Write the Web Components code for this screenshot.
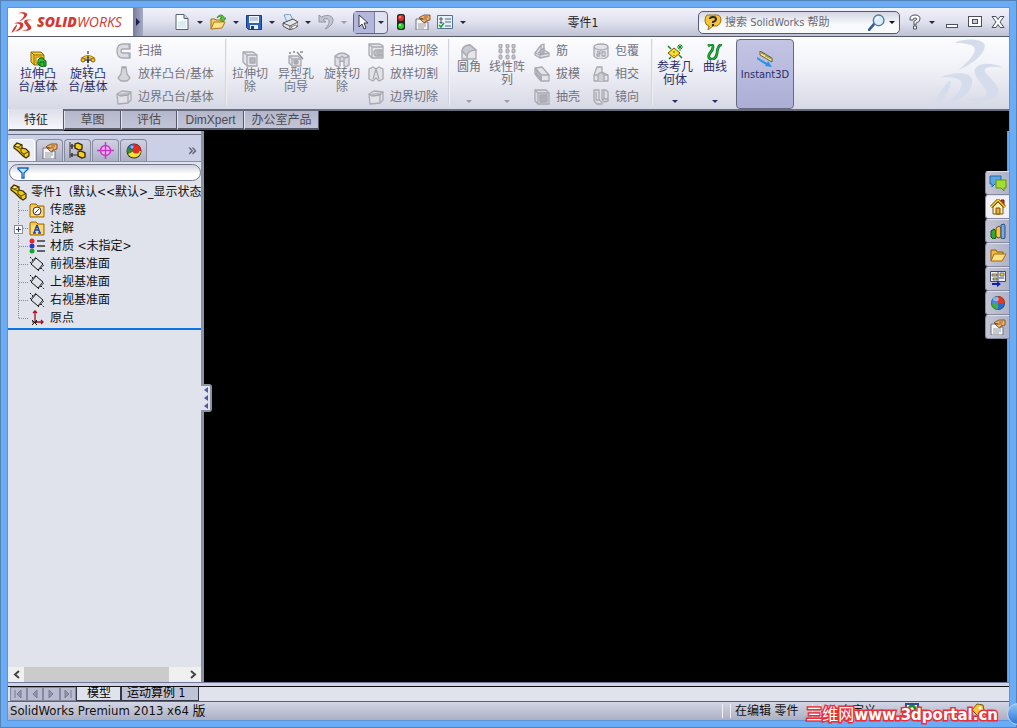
<!DOCTYPE html>
<html lang="zh-CN">
<head>
<meta charset="utf-8">
<title>SolidWorks - 零件1</title>
<style>
html,body{margin:0;padding:0}
body{font:12px/14px "DejaVu Sans Condensed","Noto Sans CJK SC",sans-serif;color:#1c1c24}
</style>
</head>
<body>
<sw-window></sw-window>
<script>
const g = (s) => `<g fill="none" stroke="#a9a9b2" stroke-width="1.3" stroke-linejoin="round">${s}</g>`;
const hand = '<path d="M5 3 9 1l6 0v5l-4 1-1 2-2-1-3-3 3 0-4-1z" fill="#f1b56d" stroke="#6b3f17" stroke-width=".8"/><path d="M9 3l4 0M8 5l4 0" stroke="#6b3f17" stroke-width=".7"/>';
const sheet = '<path d="M1 5h5l4 3 3 0v8H1z" fill="#f4f4f4" stroke="#6f7380"/><path d="M3 10h8M3 12h8M3 14h6" stroke="#858995" stroke-width=".8"/>';
const part = '<path d="M1 4 4 1l5 2v3l4 1 3 3v4l-3 2-3-2-5-5-4-3z" fill="#f0c81c" stroke="#3a2c00" stroke-width="1.2"/><path d="M4 5l4 2v3l3 2 4-2M1 4l3 1 5-2M8 7l2-1M11 12v3" fill="none" stroke="#5c4600" stroke-width="1"/><path d="M3 3.500l2-1 2 1-2 1z" fill="#fff3a0"/>';
const folder = '<path d="M1 3l1-1h5l2 2h6v11H1z" fill="#f7c741" stroke="#96680e"/><path d="M2 5h12v9H2z" fill="#fbd970"/>';
const plane = '<path d="M7 2l7 6-5 6-7-6z" fill="none" stroke="#111"/><path d="M1 1l3 3M12 12l3 3M1 7l6-6M9 15l6-6" stroke="#111" fill="none" stroke-dasharray="1.5 1"/>';
const ball = '<circle cx="8" cy="8" r="7" fill="#38a238"/><path d="M8 8V1a7 7 0 0 0-7 7z" fill="#4588e5"/><path d="M8 8V1a7 7 0 0 1 7 7z" fill="#df3c29"/><path d="M8 8h7a7 7 0 0 1-7 7z" fill="#2f6ad2"/><path d="M8 8v7a7 7 0 0 1-7-7z" fill="#3fae43"/><circle cx="8" cy="8" r="6.500" fill="none" stroke="#0003"/><ellipse cx="6" cy="4" rx="3" ry="2" fill="#fff6"/>';
const ICONS = {
 ds:['0 0 220 212','<g fill="currentColor" transform="translate(-10 -10)"><path d="M85 20C110 8 164 8 172 28c4 24-35 59-80 76 28-20 54-52 50-66-4-12-32-16-57-16z"/><path d="M38 126c32-16 91-20 96 8 4 33-37 70-86 72 32-14 56-41 54-64-2-14-32-18-64-16z"/><path d="M66 136c6 6 2 18-6 34l-18 32-29 20c10-32 32-67 53-86z"/><path d="M226 96c-26-3-50-3-54 7-2 12 37 38 42 60 4 35-50 44-102 29 38 0 68-4 66-18-4-24-38-46-37-66 3-28 55-28 85-12z"/></g>'],
 new:['0 0 16 16','<path d="M2 .500h8l4 4v11H2z" fill="#f8fcfe" stroke="#59616e"/><path d="M10 .500v4h4" fill="#c8dce8" stroke="#59616e"/><path d="M4 8l8-2v8H4z" fill="#dcebf4"/>'],
 open:['0 0 16 16','<path d="M1 15V5h4l1 1h5v3" fill="#f6d264" stroke="#9a6d14"/><path d="M1 15l3-7h11l-3 6z" fill="#fde28a" stroke="#a97a1b"/><path d="M7 4c1-4 7-4 7 0h2l-3 4-3-4h2c-1-2-3-2-5 0z" fill="#5fc73c" stroke="#1c7d1d" stroke-width=".7"/>'],
 save:['0 0 16 16','<path d="M.500 1.500h15v14h-13l-2-2z" fill="#2d63bd" stroke="#153c86"/><path d="M3 2h10v7H3z" fill="#f0f5fc"/><path d="M4 4h8M4 6h8" stroke="#8aa2c4"/><path d="M4 11h8v4H4z" fill="#e8eef8"/><path d="M5 12h3v3H5z" fill="#173e86"/>'],
 print:['0 0 16 16','<path d="M2 1l6-1 3 6-6 2z" fill="#d4e8fa" stroke="#6b89ab" stroke-width=".8"/><path d="M1 9l10-4 5 3v4l-8 4-7-4z" fill="#e8e8ea" stroke="#4a4a50"/><path d="M1 9l7 3 8-4M8 12v4" fill="none" stroke="#4a4a50" stroke-width=".9"/><path d="M9 13l5-2 1 2-4 2z" fill="#fff" stroke="#555" stroke-width=".7"/>'],
 undo:['0 0 16 16','<path d="M1 1v7h7L5 5.500c6-3 9 3 2 9.500 13-5 9-18-3.500-12z" fill="#c3c5d0" stroke="#8b8e9b" stroke-width=".9"/>'],
 cursor:['0 0 16 16','<path d="M3 1v12l3-3 2 5 2-1-2-5h4z" fill="#fff" stroke="#3b3b52"/>'],
 light:['0 0 10 16','<rect x="1" y="0" width="8" height="16" rx="2.500" fill="#252525"/><circle cx="5" cy="4" r="3" fill="#e5342c"/><circle cx="5" cy="12" r="3" fill="#2fcc2b"/><circle cx="4" cy="3" r="1" fill="#ff9a8d"/><circle cx="4" cy="11" r="1" fill="#a8ff9b"/>'],
 props:['0 0 16 16',sheet+hand],
 options:['0 0 16 16','<path d="M.500 1.500h15v13H.500z" fill="#e6f3fb" stroke="#54718d"/><path d="M3 4h2v2H3zM3 8h2v1H3z" fill="#fff" stroke="#456"/><path d="M8 5h6M8 8h6M8 12h6" stroke="#49647d"/><path d="M2 11l2 2 3-4" fill="none" stroke="#1ba228" stroke-width="1.500"/>'],
 help:['0 0 18 16','<path d="M3 1h11q3 1 3 5t-4 6h-4l-5 4 1-4q-4-1-4-5 0-5 2-6z" fill="#f7c536" stroke="#a2701c"/><path d="M6 5q0-2 3-2t3 2-3 3v1M9 10v2" fill="none" stroke="#2b2b2b" stroke-width="2"/>'],
 lens:['0 0 16 16','<path d="M6 9l-5 6" stroke="#355f96" stroke-width="2.500" stroke-linecap="round"/><circle cx="10" cy="6" r="5" fill="#d9eefb" stroke="#57789f" stroke-width="1.300"/><path d="M7 5q1-2 3-2" fill="none" stroke="#fff" stroke-width="1.500"/>'],
 question:['0 0 12 16','<path d="M1 5Q1 1 6 1t5 4q0 3-4 4v2H5V7q3-1 3-2 0-1-2-1T4 6H1zM4.500 12h3v3h-3z" fill="#fff" stroke="#4d5060"/>'],
 min:['0 0 14 14','<rect x="1.500" y="9.500" width="11" height="3" fill="#fff" stroke="#4d5060"/>'],
 restore:['0 0 14 14','<rect x=".500" y="1.500" width="13" height="10" fill="#fff" stroke="#4d5060"/><rect x="4.500" y="4.500" width="5" height="4" fill="#ccd" stroke="#4d5060"/>'],
 close:['0 0 14 14','<path d="M1 1.500h4l2 3 2-3h4L9 7l4 5.500H9L7 9.500l-2 3H1L5 7z" fill="#fff" stroke="#4d5060"/>'],
 extrude:['0 0 17 16','<path d="M1 1h10l3 3v10H4l-3-3z" fill="#f6cb2d" stroke="#8a6a07"/><path d="M1 1l3 3h10M4 4v10" fill="none" stroke="#8a6a07"/><path d="M6 6h6v6H6z" fill="#fff2a6" stroke="#a17b0c"/><path d="M8 9l2-2h3l1 2 2 1v5l-2 1-4-1-2-2z" fill="#2fc433" stroke="#0b6312"/><path d="M10 11h4v4M10 11v4" fill="none" stroke="#0b6312"/>'],
 revolve:['0 0 16 16','<path d="M8 0v16" stroke="#111" stroke-dasharray="3 1.500"/><path d="M2 8q6-5 12 0" fill="none" stroke="#9a6b00" stroke-width="3"/><path d="M2 8q6-5 12 0" fill="none" stroke="#fdd33c" stroke-width="1.500"/><circle cx="3" cy="9" r="2" fill="#fdc823" stroke="#8a5d00"/><circle cx="13" cy="9" r="2" fill="#fdc823" stroke="#8a5d00"/><path d="M5 9h6M8 5v7" stroke="#111"/>'],
 sweep:['0 0 16 16',g('<path d="M14 1H7Q1 1 1 8t6 7h7v-5H7q-2 0-2-2t2-2h7z" fill="#dcdce2"/><path d="M14 1q-2 2 0 5M14 10q-2 2 0 5"/>')],
 loft:['0 0 16 16',g('<path d="M6 1h4l1 7 3 4-3 3H5l-3-3 3-4z" fill="#d5d5dc"/><path d="M6 1q2 2 4 0"/>')],
 boundary:['0 0 16 16',g('<path d="M1 5l5-3 9 1v8l-3 3-10 1z" fill="#e2e2e7"/><path d="M1 5l3 2 8-1 3-3" fill="#bdbdc6"/><path d="M12 6v8"/>')],
 cut:['0 0 16 16',g('<path d="M1 1h10l4 3v11H5l-4-4z" fill="#e4e4e9"/><path d="M1 1l4 3h10M5 4v11"/><path d="M8 7h5v5H8z" fill="#b9b9c2"/>')],
 hole:['0 0 16 16',g('<path d="M1 5h9l3 3v7H4l-3-3z" fill="#e4e4e9"/><path d="M1 5l3 3h9M4 8v7"/><circle cx="8" cy="11" r="2" fill="#aaa"/><path d="M9 1l6 7M1 2h2M5 1h2M12 1h3" stroke="#888891"/>')],
 revcut:['0 0 16 16',g('<path d="M1 5q7-6 14 0v9q-2 2-5 1v-4q-2-2-4 0v4q-3 1-5-1z" fill="#dedee4"/><path d="M1 5q2 2 5 2l2-2 2 2q3 0 5-2M6 7v4M10 7v4"/>')],
 cutsweep:['0 0 16 16',g('<path d="M1 1h11l3 2v12H4l-3-3z" fill="#e6e6ea"/><path d="M1 1l3 3v11M4 4h11"/><path d="M14 7H9q-3 0-3 3t3 3h5v-2h-4q-2-1 0-2h4z" fill="#c3c3cb"/>')],
 cutloft:['0 0 16 16',g('<path d="M1 3l4-2 3 2 3-2 4 2v10l-4 2-3-3-3 3-4-2z" fill="#e2e2e7"/><path d="M8 3l-3 10M8 3l3 10" fill="#bbb"/>')],
 fillet:['0 0 16 16',g('<path d="M1 15V7q1-6 8-6l6 5v9H6z" fill="#e6e6ea"/><path d="M1 7l5 5v3"/><path d="M1 7q1-6 8-6l6 5q-8 0-9 6z" fill="#c9c9d1"/>')],
 pattern:['0 0 18 16','<g fill="#c9c9d0" stroke="#9c9ca6">'+[2,9,15].map(x=>[2,7,13].map(y=>`<rect x="${x-1}" y="${y-2}" width="3" height="4" rx="1"/>`).join('')).join('')+'</g>'],
 rib:['0 0 16 16',g('<path d="M1 10l6-8 3-1v6l5 3v3l-9 2-5-3z" fill="#e2e2e7"/><path d="M1 10l5 2 9-2M6 12v3M7 2v6l-3 2" /><path d="M6 8l4-3v5l-4 1z" fill="#b6b6bf"/>')],
 draft:['0 0 16 16',g('<path d="M1 2l7-1 7 8v6H7L1 8z" fill="#e3e3e8"/><path d="M1 2l6 7h8M7 9v6" /><path d="M2 3l5 6v5L2 7z" fill="#bdbdc6"/>')],
 shell:['0 0 16 16',g('<path d="M1 1h11l3 3v11H4l-3-3z" fill="#dcdce2"/><path d="M4 4h11M1 1l3 3v11"/><path d="M6 6h7v7H6z" fill="#b0b0ba"/>')],
 wrap:['0 0 16 16',g('<path d="M1 4q0-3 7-3t7 3v9q-2 3-7 3t-7-3z" fill="#e3e3e8"/><path d="M1 4q2 3 7 3t7-3M4 9h3v2H4v2h3M9 9h3v4H9z"/>')],
 intersect:['0 0 16 16',g('<path d="M1 9l3-8h5v5l6 3v6H1z" fill="#e3e3e8"/><path d="M5 15V9q3-5 6 0v6M1 9h4M11 9h4M9 6L5 8" fill="#cdcdd4"/>')],
 mirror:['0 0 16 16',g('<path d="M1 1h5v10l3 2v2H4l-3-3zM9 1h4l2 2v9l-4 1-2-3z" fill="#dfdfe5"/><path d="M3 3v8h3M9 10h6M11 1v9"/>')],
 refgeo:['0 0 16 16','<path d="M1 2l3 3M12 11l3 3M4 13l-2 2" stroke="#0c8b23" stroke-width="1.500"/><path d="M7 4l6 5-6 5-6-5z" fill="#ffdc27" stroke="#6d5300"/><path d="M7 7v2M7 11v1M13 0v7M10 3h6M11 1l4 4M15 1l-4 4" stroke="#0a8824"/>'],
 curve:['0 0 16 16','<path d="M1 2q5-3 5 1 0 3-3 6-3 5 1 6 5 1 6-6 1-9 5-8" fill="none" stroke="#087423" stroke-width="2.800"/><path d="M1 2q5-3 5 1 0 3-3 6-3 5 1 6 5 1 6-6 1-9 5-8" fill="none" stroke="#24b63a" stroke-width="1.200"/>'],
 instant:['0 0 18 16','<path d="M4 0l12 7v4L4 4z" fill="#f3e88a" stroke="#494416" stroke-width=".8"/><path d="M6 1v2M8 2v2M10 4v2M12 5v2M14 6v2" stroke="#494416" stroke-width=".8"/><path d="M1 6l10 6 1-2 4 6-7-1 1-1-9-6z" fill="#2493ed"/>'],
 part:['0 0 17 17',part],
 config:['0 0 17 17','<path d="M1 0v16M1 4h5M1 13h8" stroke="#333" fill="none"/><path d="M6 2l3-1 4 2v4l-3 1-4-2zM9 10l3-1 4 2v4l-3 1-4-2z" fill="#f4cc24" stroke="#332800" stroke-width="1.300"/><path d="M3 2v5M3 11v4" stroke="#333" stroke-width="1.500"/>'],
 dim:['0 0 17 17','<circle cx="8.500" cy="8.500" r="5" fill="#efbdf0" stroke="#cc32cc" stroke-width="1.500"/><path d="M8.500 0v17M0 8.500h17" stroke="#cc32cc" stroke-width="1.500"/>'],
 display:['0 0 16 16','<circle cx="8" cy="8" r="7.500" fill="#222"/><path d="M8 8L2 4a7 7 0 0 1 6-3z" fill="#276fd0"/><path d="M8 8V1a7 7 0 0 1 7 7z" fill="#e12c21"/><path d="M8 8l-6 3a7 7 0 0 1 0-7z" fill="#2f8f34"/><path d="M8 8l7 0a7 7 0 0 1-13 3z" fill="#f5e234"/><circle cx="10" cy="7" r="3.500" fill="#e12c21"/><circle cx="6" cy="4" r="1.500" fill="#fff8"/>'],
 filter:['0 0 12 12','<path d="M1 1h10v1L7 6v5H5V6L1 2z" fill="#bfe6ff" stroke="#1261c4" stroke-width="1.300"/>'],
 sensor:['0 0 16 16',folder+'<circle cx="8" cy="9" r="4" fill="#fff" stroke="#333"/><path d="M6 11l4-4" stroke="#246"/>'],
 note:['0 0 16 16',folder+'<path d="M8 5l-3 8M8 5l3 8M6 10h4M4 13h3M9 13h3" stroke="#1d45c0" stroke-width="1.500" fill="none"/>'],
 material:['0 0 16 16','<circle cx="3" cy="3" r="2.500" fill="#e92629"/><circle cx="3" cy="8" r="2.500" fill="#2438cf"/><circle cx="3" cy="13" r="2.500" fill="#19a72b"/><path d="M8 3h8M8 8h8M8 13h8" stroke="#3a3a3a" stroke-width="1.500"/>'],
 plane:['0 0 16 16',plane],
 origin:['0 0 16 16','<path d="M6 1v10M6 12h8M4 3l2-2 2 2M12 10l2 2-2 2" fill="none" stroke="#a80e1c" stroke-width="1.300"/><path d="M3 10l5 5M8 10l-5 5M3 12h5" stroke="#111"/>'],
 chat:['0 0 18 16','<path d="M1 1h11v8H6l-3 3V9H1z" fill="#5ba5e8" stroke="#2468aa"/><path d="M7 5h10v8h-2v3l-3-3H7z" fill="#a4dc2f" stroke="#5d9513"/>'],
 home:['0 0 16 16','<path d="M11 1h3v6h-3z" fill="#d33c29" stroke="#6d1c12"/><path d="M3 8v7h10V8L8 3z" fill="#fff3b5" stroke="#7b5309"/><path d="M1 8l7-7 7 7" fill="none" stroke="#7b5309" stroke-width="3"/><path d="M1 8l7-7 7 7" fill="none" stroke="#ffd23a" stroke-width="1.300"/><path d="M6 9h4v6H6z" fill="#f1a73c" stroke="#7b5309"/>'],
 lib:['0 0 16 16','<path d="M1 8l3-2 2 2v7l-3 1-2-2z" fill="#32a734" stroke="#0e5411"/><path d="M6 5l3-2 2 2v9l-3 1-2-2z" fill="#f6c53a" stroke="#76540a"/><path d="M11 2l3-1 1 2v12l-3 1-1-2z" fill="#77a9e8" stroke="#244d88"/>'],
 folder:['0 0 16 16','<path d="M1 14V3h5l1 2h6v3" fill="#f3b948" stroke="#925a05"/><path d="M1 14l3-7h12l-4 7z" fill="#ffe184" stroke="#a56a0a"/>'],
 palette:['0 0 16 16','<path d="M.500.500h15v10H.500z" fill="#eef1f8" stroke="#3f4a66"/><path d="M2 3h5v2H2zM10 2h4v3h-4zM3 7h4v2H3z" fill="#f4cb36" stroke="#3f4a66" stroke-width=".7"/><path d="M8 1v9M9 7h5" stroke="#3f4a66"/><path d="M2 12h5v-2l4 3-4 3v-2H2z" fill="#0e1dc1"/>'],
 ball:['0 0 16 16',ball]
};
class SwIcon extends HTMLElement{
 static observedAttributes=['name','size'];
 constructor(){super();this.attachShadow({mode:'open'})}
 connectedCallback(){this.draw()}
 attributeChangedCallback(){this.draw()}
 draw(){
  const [box,art]=ICONS[this.getAttribute('name')]||['0 0 1 1',''];
  const [,,w,h]=box.split(' '), k=this.getAttribute('size')?this.getAttribute('size')/h:1;
  this.shadowRoot.innerHTML=`<style>:host{display:inline-flex;flex:none}svg{display:block}</style><svg aria-hidden="true" width="${Math.round(w*k)}" height="${Math.round(h*k)}" viewBox="${box}">${art}</svg>`;
 }
}
customElements.define('sw-icon',SwIcon);

const RESET='*{box-sizing:border-box}button,input{font:inherit;color:inherit;margin:0;padding:0;border:0;background:none}a{color:inherit;text-decoration:none}';
/* Registers an element whose shadow tree is cloned from one template. */
function element(tag,css,html,setup){
 const t=document.createElement('template');
 t.innerHTML=`<style>${RESET}${css}</style>${html}`;
 customElements.define(tag,class extends HTMLElement{
  constructor(){super();this.attachShadow({mode:'open'}).append(t.content.cloneNode(true));}
  connectedCallback(){setup&&setup(this,this.shadowRoot)}
 });
}
const pass=(el,r)=>r.querySelector('sw-icon').setAttribute('name',el.getAttribute('icon'));

element('sw-arrow',`:host{display:inline-flex;flex:none}button{width:var(--w,9px);height:16px;display:flex;align-items:center;justify-content:center}i{border:3px solid transparent;border-top-color:currentColor;border-bottom:0}`,
 '<button type="button" aria-label="more"><i></i></button>');

element('sw-quick',`:host{display:flex;align-items:center}button{display:flex;width:18px;height:20px;align-items:center;justify-content:center}`,
 '<button type="button"><sw-icon></sw-icon></button>',pass);

element('sw-search',`:host{display:flex;align-items:center;width:202px;height:23px;border:1px solid #555a6c;border-radius:5px;background:linear-gradient(#d3d6e2,#f9fafc 60%);padding:0 0 0 5px;color:#6b6e7a;box-sizing:border-box}
 input{flex:1;min-width:0;margin:2px 2px 0 3px;outline:0;font:11px/16px "DejaVu Sans Condensed","Noto Sans CJK SC",sans-serif}input::placeholder{color:#666a76;opacity:1}sw-arrow{color:#111;--w:14px}button{display:flex}`,
 '<sw-icon name="help"></sw-icon><input type="search" aria-label="搜索" placeholder="搜索 SolidWorks 帮助"><button type="button" aria-label="go"><sw-icon name="lens" size="17"></sw-icon></button><sw-arrow></sw-arrow>');

element('sw-titlebar',`:host{display:flex;align-items:center;height:29px;box-sizing:border-box;border-bottom:1px solid #555a6b;background:linear-gradient(#f1f2fb,#dfe1ee 50%,#bfc2d4);color:#26264e}
 .logo{display:flex;align-items:center;height:28px;width:125px;background:#fff;color:#d23a31;padding-left:3px;gap:4px;font:italic 14px/20px "Open Sans",sans-serif}
 .logo b{font-weight:800}
 .flyout{width:10px;height:28px;background:linear-gradient(90deg,#7a7d9a,#a6a9c2);display:flex;align-items:center;justify-content:center}
 .flyout i{border:4px solid transparent;border-left-color:#1d1d50;border-right:0}
 .tools{display:flex;align-items:center;margin-left:30px;gap:4px}
 .pair{display:flex;align-items:center;gap:4px;width:32px}
 .off{color:#9a9dab}
 .sel{display:flex;width:35px;height:23px;border:1px solid #62667e;border-radius:4px;background:#e0e1ef;align-items:center}
 .sel sw-quick{width:21px;height:21px;background:#b4b6dc;border-right:1px solid #7d80a0;padding-left:1px}.sel sw-arrow{--w:12px}
 h1{flex:1;margin:0;text-align:center;font:12px/16px "DejaVu Sans Condensed","Noto Sans CJK SC",sans-serif;color:#1c1c24;white-space:nowrap;padding-top:2px}
 .win{display:flex;align-items:center;margin:0 4px 0 9px;gap:9px}.win button{display:flex}.q{display:flex;gap:6px;align-items:center}`,
 `<a class="logo" href="#" aria-label="SolidWorks"><sw-icon name="ds" size="21"></sw-icon><span><b>SOLID</b>WORKS</span></a><button class="flyout" type="button" aria-label="menu"><i></i></button>
 <div class="tools"><span class="pair"><sw-quick icon="new"></sw-quick><sw-arrow></sw-arrow></span><span class="pair"><sw-quick icon="open"></sw-quick><sw-arrow></sw-arrow></span><span class="pair"><sw-quick icon="save"></sw-quick><sw-arrow></sw-arrow></span><span class="pair"><sw-quick icon="print"></sw-quick><sw-arrow></sw-arrow></span><span class="pair off"><sw-quick icon="undo"></sw-quick><sw-arrow></sw-arrow></span>
 <span class="sel"><sw-quick icon="cursor"></sw-quick><sw-arrow></sw-arrow></span><sw-quick icon="light"></sw-quick><sw-quick icon="props"></sw-quick><span class="pair"><sw-quick icon="options"></sw-quick><sw-arrow></sw-arrow></span></div>
 <h1>零件1</h1><sw-search></sw-search>
 <div class="win"><span class="q"><button type="button" aria-label="help"><sw-icon name="question"></sw-icon></button><sw-arrow></sw-arrow></span><button type="button" aria-label="minimize"><sw-icon name="min"></sw-icon></button><button type="button" aria-label="restore"><sw-icon name="restore"></sw-icon></button><button type="button" aria-label="close"><sw-icon name="close"></sw-icon></button></div>`);

element('sw-tool',`:host{display:flex;flex:none;width:46px}:host([wide]){width:50px}:host([narrow]){width:38px}
 button{width:100%;height:70px;display:flex;flex-direction:column;align-items:center;padding-top:12px;color:#2c2c66;line-height:13px;gap:1px;white-space:nowrap}
 :host([off]) button{color:#71727c}:host([high]) button{padding-top:5px}
 :host([more]) button::after{content:"";margin:auto 0 6px;border:3px solid transparent;border-top-color:currentColor;border-bottom:0}
 :host([off]) button::after{opacity:.6}
 :host([pressed]){width:58px}:host([pressed]) button{border:1px solid #666a80;border-radius:4px;background:linear-gradient(#c4c5e4,#acaed6);padding-top:11px;font-size:11px}`,
 '<button type="button"><sw-icon></sw-icon><span><slot></slot></span></button>',pass);

element('sw-row-tool',`:host{display:block}button{display:flex;align-items:center;gap:6px;height:23px;color:#71727c;white-space:nowrap}`,
 '<button type="button"><sw-icon></sw-icon><span><slot></slot></span></button>',pass);

element('sw-ribbon',`:host{display:flex;height:74px;box-sizing:border-box;padding:2px 5px 0;background:linear-gradient(#fdfdff,#f0f1f7 45%,#d6d8e5);border-bottom:2px solid #686c7c;overflow:hidden}
 .col{display:flex;flex-direction:column;padding-left:3px}
 hr{width:2px;height:66px;margin:0 0 0 auto;border:0;background:linear-gradient(90deg,#c3c5d2,#fff);flex:none}
 .g1,.g2,.g3,.g4{display:flex}.g1{width:214px}.g2{width:223px}.g3{width:203px}.g4{width:83px;padding-left:3px;gap:2px}
 .g3 .col{padding-left:8px}.g3 .col+.col{padding-left:13px}
 .mark{margin-left:auto;color:#d5dcec}`,
 `<div class="g1"><sw-tool wide icon="extrude">拉伸凸<br>台/基体</sw-tool><sw-tool wide icon="revolve">旋转凸<br>台/基体</sw-tool><div class="col"><sw-row-tool icon="sweep">扫描</sw-row-tool><sw-row-tool icon="loft">放样凸台/基体</sw-row-tool><sw-row-tool icon="boundary">边界凸台/基体</sw-row-tool></div><hr></div>
 <div class="g2"><sw-tool off icon="cut">拉伸切<br>除</sw-tool><sw-tool off icon="hole">异型孔<br>向导</sw-tool><sw-tool off icon="revcut">旋转切<br>除</sw-tool><div class="col"><sw-row-tool icon="cutsweep">扫描切除</sw-row-tool><sw-row-tool icon="cutloft">放样切割</sw-row-tool><sw-row-tool icon="boundary">边界切除</sw-row-tool></div><hr></div>
 <div class="g3"><sw-tool off high more narrow icon="fillet">圆角</sw-tool><sw-tool off high more narrow icon="pattern">线性阵<br>列</sw-tool><div class="col"><sw-row-tool icon="rib">筋</sw-row-tool><sw-row-tool icon="draft">拔模</sw-row-tool><sw-row-tool icon="shell">抽壳</sw-row-tool></div><div class="col"><sw-row-tool icon="wrap">包覆</sw-row-tool><sw-row-tool icon="intersect">相交</sw-row-tool><sw-row-tool icon="mirror">镜向</sw-row-tool></div><hr></div>
 <div class="g4"><sw-tool high more narrow icon="refgeo">参考几<br>何体</sw-tool><sw-tool high more narrow icon="curve">曲线</sw-tool><hr></div>
 <sw-tool pressed icon="instant">Instant3D</sw-tool><div class="mark"><sw-icon name="ds" size="70"></sw-icon></div>`);

element('sw-tab',`:host{display:block}button{display:block;height:19px;border:1px solid #555a6b;border-left-color:#e4e5ef;border-width:0 1px 2px 1px;padding:0;background:linear-gradient(#b4b7cb,#c3c5d7);color:#4a4a52;font:12px/19px "Liberation Sans","Noto Sans CJK SC",sans-serif;white-space:nowrap;width:100%}
 :host([active]) button{height:22px;border-color:#555a6b;border-left-color:#fff;background:linear-gradient(#dcdee9,#f6f7fb);color:#1c1c24;padding-top:2px}:host([active]){margin-top:-2px}`,
 '<button type="button" role="tab"><slot></slot></button>');
element('sw-tabs',`:host{display:flex;height:20px;background:#000;align-items:flex-start;position:relative}sw-tab{width:57px}sw-tab.w1{width:56px}sw-tab.w2{width:67px}sw-tab.w3{width:75px}`,
 `<sw-tab active class="w1">特征</sw-tab><sw-tab>草图</sw-tab><sw-tab class="w1">评估</sw-tab><sw-tab class="w2">DimXpert</sw-tab><sw-tab class="w3">办公室产品</sw-tab>`);

element('sw-node',`:host{display:flex;align-items:center;height:18px;white-space:nowrap;color:#111}
 .guide{width:21px;height:18px;flex:none;display:flex;align-items:center;background:repeating-linear-gradient(#888 0 1px,#0000 1px 2px) 10px 0/1px var(--run,18px) no-repeat,repeating-linear-gradient(90deg,#888 0 1px,#0000 1px 2px) 11px 9px/10px 1px no-repeat}
 :host([last]){--run:10px}:host([root]) .guide{width:2px;background:none}:host([root]) span{margin-left:4px}
 .box{display:none;width:9px;height:9px;margin:2px 0 0 6px;border:1px solid #8a8d99;background:linear-gradient(#27457a,#27457a) 3px 1px/1px 5px no-repeat,linear-gradient(#27457a,#27457a) 1px 3px/5px 1px no-repeat,#fff}
 :host([closed]) .box{display:block}span{margin-left:5px}`,
 '<div class="guide"><button class="box" type="button" aria-label="expand"></button></div><sw-icon></sw-icon><span><slot></slot></span>',pass);

element('sw-panel-tab',`:host{display:block}button{width:27px;height:22px;display:flex;align-items:center;justify-content:center;border:1px solid #878a9e;border-bottom:0;border-radius:4px 4px 0 0;background:linear-gradient(#d0d2e2,#adb0c6)}
 :host([active]) button{background:#eceef5;border-color:#fff}`,'<button type="button"><sw-icon></sw-icon></button>',pass);

element('sw-tree-panel',`:host{display:flex;flex-direction:column;width:196px;box-sizing:border-box;flex:none;background:#e0e3ec;border-right:3px solid #8d91a4;position:relative;z-index:1}
 .top{height:4px;background:#d0d3e4;border-bottom:1px solid #6b6f86}
 .tabs{display:flex;gap:1px;padding:4px 0 0;background:#ccd0e6;border-bottom:1px solid #8c90a5;align-items:center}.tabs button{margin-left:auto;padding-right:4px;font-size:17px;color:#55586a}
 label{display:flex;align-items:center;height:17px;margin:2px 0 2px 1px;border:1px solid #73778a;border-radius:9px;background:linear-gradient(#cfd2dd,#fff 60%);padding-left:7px}
 input{flex:1;min-width:0;outline:0}
 .tree{overflow:hidden;padding-bottom:1px;border-bottom:2px solid #0a73e6}
 .bar{margin-top:auto;height:15px;display:flex;background:#f0f0f0;justify-content:space-between}.bar button{width:16px;display:flex;align-items:center;justify-content:center}.bar i{width:145px;margin-right:auto;background:#cbcbcb}
 svg{display:block}
 .grip{position:absolute;left:193px;top:253px;width:11px;height:28px;border:2px solid #8d91a4;border-left:0;border-radius:0 3px 3px 0;background:#e0e3ec;display:flex;flex-direction:column;align-items:center;justify-content:space-around}
 .grip i{border:3px solid transparent;border-right:4px solid #5257a0;border-left:0}`,
 `<div class="top"></div><div class="tabs" role="tablist"><sw-panel-tab active icon="part"></sw-panel-tab><sw-panel-tab icon="props"></sw-panel-tab><sw-panel-tab icon="config"></sw-panel-tab><sw-panel-tab icon="dim"></sw-panel-tab><sw-panel-tab icon="display"></sw-panel-tab><button type="button">»</button></div>
 <label><sw-icon name="filter"></sw-icon><input type="text" aria-label="filter"></label>
 <div class="tree"><sw-node root icon="part">零件1&nbsp; (默认&lt;&lt;默认&gt;_显示状态</sw-node><sw-node icon="sensor">传感器</sw-node><sw-node closed icon="note">注解</sw-node><sw-node icon="material">材质 &lt;未指定&gt;</sw-node><sw-node icon="plane">前视基准面</sw-node><sw-node icon="plane">上视基准面</sw-node><sw-node icon="plane">右视基准面</sw-node><sw-node last icon="origin">原点</sw-node></div>
 <div class="bar"><button type="button" aria-label="left"><svg width="7" height="9"><path d="M6 1L2 4.500 6 8" fill="none" stroke="#444" stroke-width="2"/></svg></button><i></i><button type="button" aria-label="right"><svg width="7" height="9"><path d="M1 1l4 3.500L1 8" fill="none" stroke="#444" stroke-width="2"/></svg></button></div>
 <button class="grip" type="button" aria-label="collapse"><i></i><i></i><i></i></button>`);

element('sw-task',`:host{display:block}button{width:24px;height:24px;display:flex;align-items:center;justify-content:center;border:1px solid #878a9e;border-top-color:#dfe0ea;border-right:0;border-radius:3px 0 0 3px;background:linear-gradient(90deg,#c4c6d6,#b0b3c6)}:host([active]) button{background:#f1f2f7}`,
 '<button type="button"><sw-icon></sw-icon></button>',pass);
element('sw-viewport',`:host{display:block;flex:1;background:#000;position:relative;border-right:1px solid #8b9298;margin-right:1px}nav{position:absolute;right:-2px;top:40px}`,
 '<nav><sw-task icon="chat"></sw-task><sw-task active icon="home"></sw-task><sw-task icon="lib"></sw-task><sw-task icon="folder"></sw-task><sw-task icon="palette"></sw-task><sw-task icon="ball"></sw-task><sw-task icon="props"></sw-task></nav>');

element('sw-sheets',`:host{display:flex;height:16px;box-sizing:border-box;border-top:1px solid #111;border-bottom:1px solid #5b5f70;background:#e0e3ec;padding-left:2px;color:#000}
 .nav{display:flex;width:66px}.nav button{flex:1;border:1px solid #8588a0;background:#b9bcd0;display:flex;align-items:center;justify-content:center}
 .tab{height:14px;line-height:13px;background:#c0c3d5;border:1px solid #333644;border-top:0;width:78px;white-space:nowrap;padding:0 5px;text-align:left}.tab.on{background:#e0e3ec;width:45px;padding:0 10px}`,
 `<div class="nav">${['M2 1v8M8 1L4 5l4 4z','M7 1L3 5l4 4z','M3 1l4 4-4 4z','M8 1v8M2 1l4 4-4 4z'].map((d,i)=>`<button type="button" aria-label="sheet ${i+1}"><svg width="10" height="10"><path d="${d}" fill="#9396ad" stroke="#777a94"/></svg></button>`).join('')}</div><button type="button" class="tab on">模型</button><button type="button" class="tab">运动算例 1</button>`);

element('sw-status',`:host{display:flex;align-items:center;height:18px;box-sizing:border-box;background:linear-gradient(#d3d6e5,#abafc2);color:#111;line-height:18px;padding:0 2px;white-space:nowrap}
 .product{font-size:13px}.sp{flex:1}.cell{border-left:1px solid #f0f1f7;padding-left:4px;height:14px;line-height:14px}.e{width:8px}.a{width:82px}.b{width:8px}.c{width:20px}
 .d{width:65px;border:0;padding:0}.badge{width:66px;display:flex}.end{width:36px;display:flex}`,
 `<span class="product">SolidWorks Premium 2013 x64 版</span><span class="sp"></span><span class="cell e"></span><span class="cell a">在编辑 零件</span><span class="cell b"></span><span class="cell c"></span><span class="cell d">自定义</span>
 <span class="badge"><svg width="14" height="16"><path d="M1 1h12v12H1z" fill="#fff" stroke="#2a4f9e" stroke-width="2"/><path d="M4 6q0-3 3-3t3 3-3 2v3" fill="none" stroke="#12931f" stroke-width="2.500"/></svg></span><span class="end"><svg width="14" height="16"><path d="M1 7l5-6 6 1 1 5-6 6z" fill="#f6c634" stroke="#7c5a0b"/><circle cx="9" cy="5" r="1.500" fill="#fff"/></svg></span>`);

element('sw-stamp',`:host{position:absolute;right:12px;bottom:-4px;z-index:2;display:block;color:#fff;font:16px/20px "DejaVu Sans","Noto Sans CJK SC",sans-serif;white-space:nowrap;-webkit-text-stroke:3px #e8303a;paint-order:stroke fill}b{font-size:15px}`,'<slot></slot><b><slot name="site"></slot></b>');

element('sw-window',`:host{display:flex;flex-direction:column;min-height:100vh;box-sizing:border-box;border:7px solid #6aacf6;outline:1px solid #5583b5;outline-offset:-1px;position:relative;background:#6aacf6}
 .frame{flex:1;display:flex;flex-direction:column;border:1px solid #5a95dc;min-width:0}
 main{flex:1;display:flex}.edge{height:4px;background:#d0d3ea;border-top:1px solid #73779b}
 .clip{position:absolute;right:-7px;bottom:-6px;width:10px;height:24px;overflow:hidden}
 .orb{display:block;width:22px;height:22px;border-radius:50%;background:linear-gradient(#8cc4f8,#2f74d8);border:1px solid #b7d8fb}`,
 `<div class="frame"><sw-titlebar></sw-titlebar><sw-ribbon></sw-ribbon><sw-tabs></sw-tabs><main><sw-tree-panel></sw-tree-panel><sw-viewport></sw-viewport></main><div class="edge"></div><sw-sheets></sw-sheets><sw-status></sw-status></div><div class="clip"><i class="orb"></i></div><sw-stamp>三维网<span slot="site">www.3dportal.cn</span></sw-stamp>`);
</script>
</body>
</html>
